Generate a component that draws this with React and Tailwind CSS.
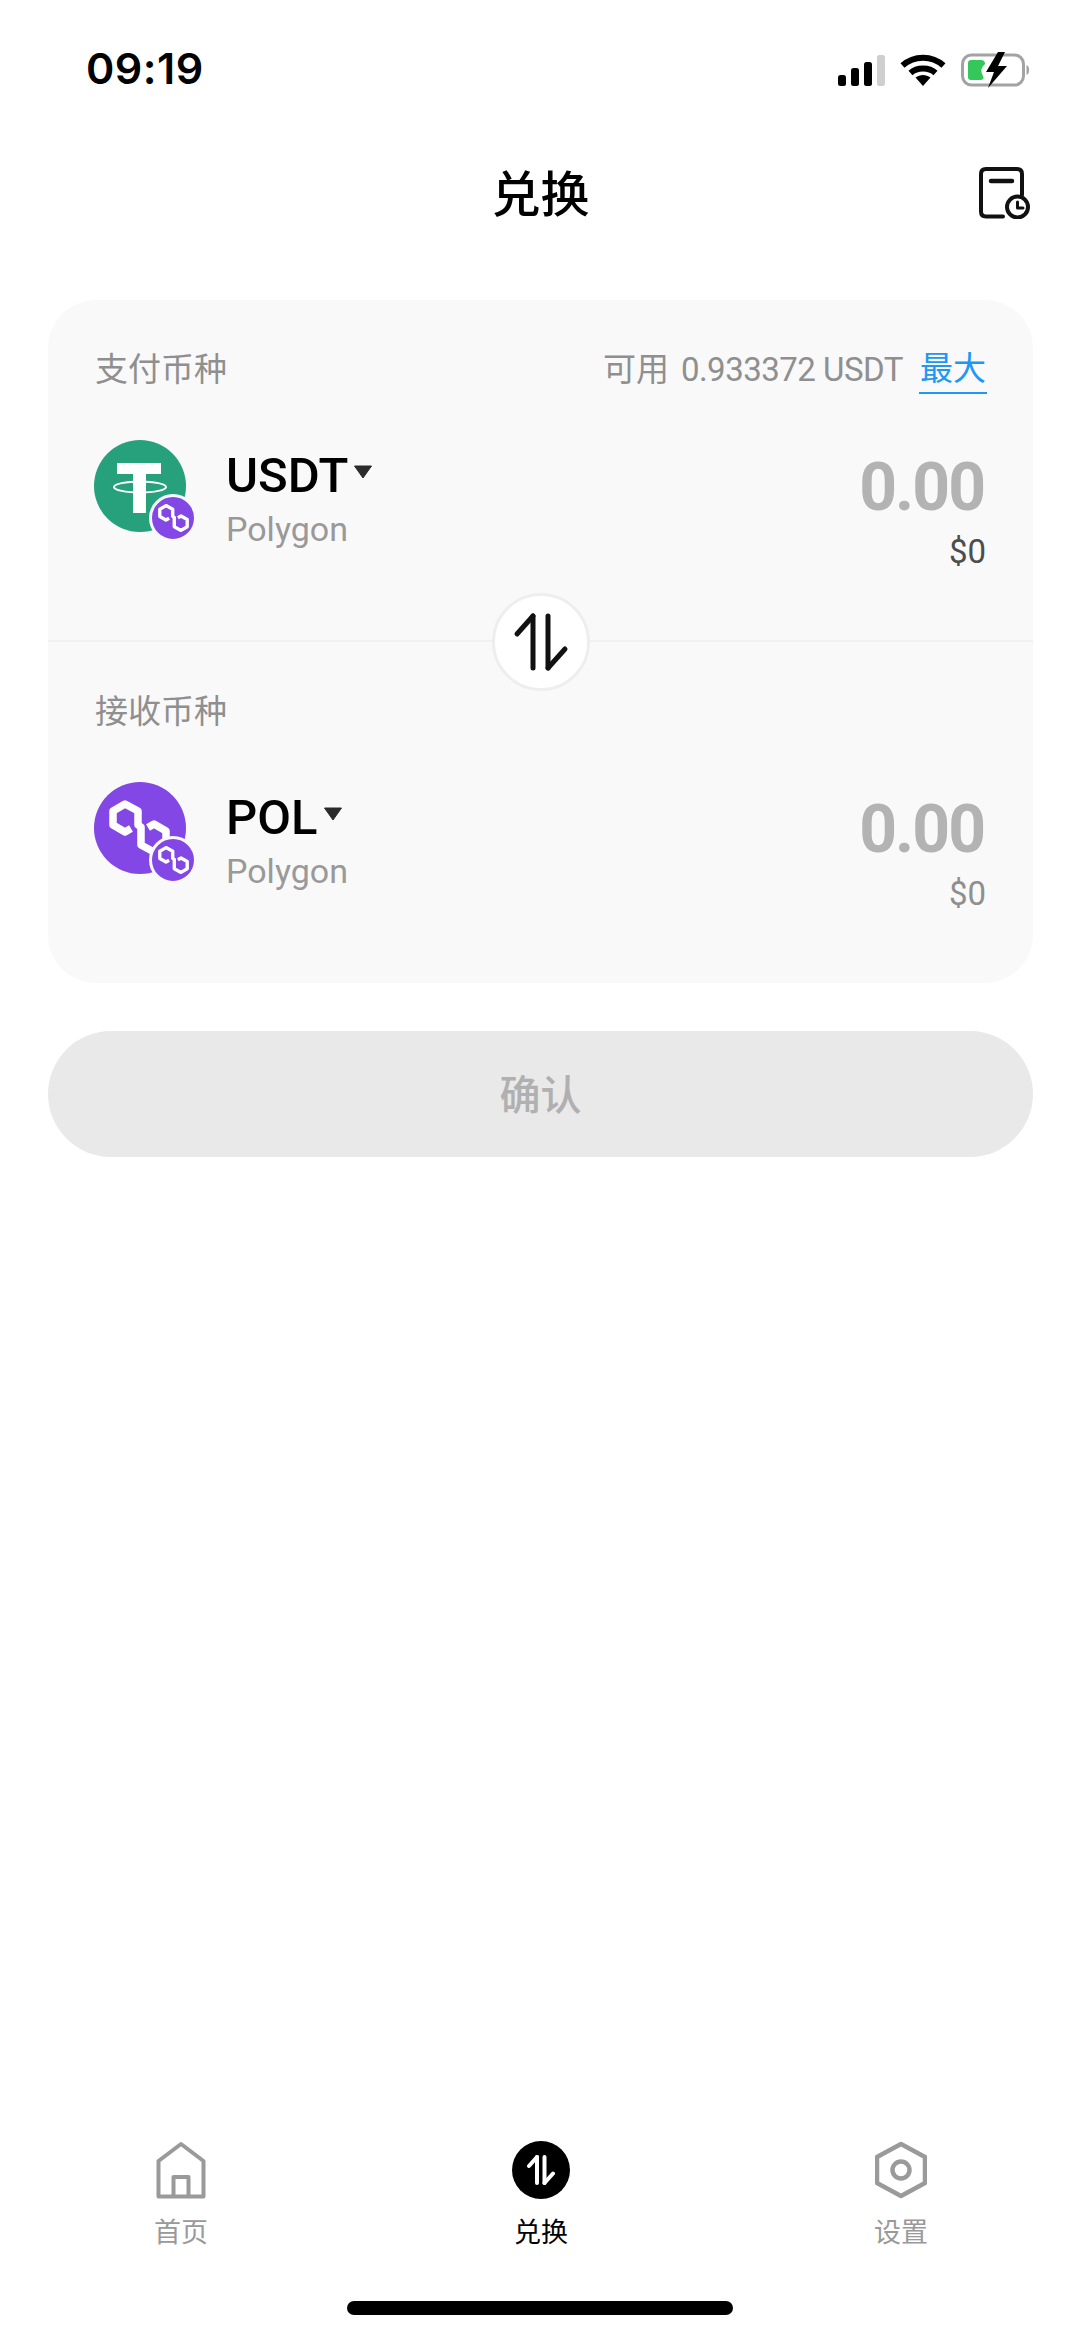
import React from "react";

const latin = "font-['Roboto','Noto_Sans_CJK_SC',sans-serif]";

function PolygonMark({ w, h, sw }) {
  return (
    <svg width={w} height={h} viewBox="14 17 63 58" fill="none" stroke="#fff" strokeWidth={sw} strokeLinejoin="round" strokeLinecap="butt">
      <path d="M37 46.5 L31 50 L19 43 V29 L31 22 L44 29 V43 L47 45 V63 L60 70 L72 63 V49 L60 42 L54 45.5" />
    </svg>
  );
}

function Badge() {
  return (
    <div className="absolute left-[55px] top-[54px] flex h-[48px] w-[48px] items-center justify-center rounded-full border-[3px] border-[#f9f9f9] bg-[#8247e5]">
      <PolygonMark w={33} h={30} sw={6.5} />
    </div>
  );
}

function TetherIcon() {
  return (
    <div className="relative h-[92px] w-[92px] shrink-0">
      <svg width="92" height="92" viewBox="0 0 92 92">
        <circle cx="46" cy="46" r="46" fill="#26a17b" />
        <rect x="23" y="23" width="44" height="11" fill="#fff" />
        <rect x="39" y="30" width="13" height="43" fill="#fff" />
        <ellipse cx="46" cy="47" rx="26" ry="5.5" fill="none" stroke="#fff" strokeWidth="2" />
      </svg>
      <Badge />
    </div>
  );
}

function PolIcon() {
  return (
    <div className="relative h-[92px] w-[92px] shrink-0">
      <div className="h-[92px] w-[92px] rounded-full bg-[#8247e5] pl-[14px] pt-[17px]">
        <PolygonMark w={63} h={58} sw={7.5} />
      </div>
      <Badge />
    </div>
  );
}

function Caret() {
  return (
    <svg width="20" height="14" viewBox="0 0 20 14" className="ml-[5px] mt-[-8px]">
      <path d="M1.5 1 H18.5 L10 13 Z" fill="#2b2b2b" stroke="#2b2b2b" strokeLinejoin="round" />
    </svg>
  );
}

function CoinRow({ icon, name, usdColor }) {
  return (
    <div className="mt-[46px] flex items-start justify-between">
      <div className="flex items-start">
        {icon}
        <div className="ml-[40px] flex flex-col">
          <div className="mt-[10px] flex h-[52px] items-center">
            <span className={`${latin} text-[49px] font-medium leading-[52px] text-black`}>{name}</span>
            <Caret />
          </div>
          <span className={`${latin} mt-[7px] text-[34px] leading-[40px] text-[#999999]`}>Polygon</span>
        </div>
      </div>
      <div className="flex flex-col items-end pr-[1px]">
        <span className={`${latin} mt-[12px] pr-[2px] text-[66px] font-bold leading-[72px] tracking-[-2px] text-[#b3b3b3]`}>0.00</span>
        <span className={`${latin} mt-[8px] text-[33px] leading-[40px] ${usdColor}`}>$0</span>
      </div>
    </div>
  );
}

function Signal() {
  return (
    <svg width="47" height="31" viewBox="0 0 47 31">
      <rect x="0" y="20" width="8" height="11" rx="2.5" fill="#000" />
      <rect x="13" y="13" width="8" height="18" rx="2.5" fill="#000" />
      <rect x="26" y="7" width="8" height="24" rx="2.5" fill="#000" />
      <rect x="39" y="0" width="8" height="31" rx="2.5" fill="#cfcfcf" />
    </svg>
  );
}

function Wifi() {
  return (
    <svg width="46" height="33" viewBox="0 0 46 33" fill="none" stroke="#000" strokeWidth="6">
      <path d="M2.5 11.5 C14 1 32 1 43.5 11.5" />
      <path d="M10.5 19 C17 13 29 13 35.5 19" />
      <path d="M15.5 23.5 L23 32 L30.5 23.5 C26 20 20 20 15.5 23.5 Z" fill="#000" stroke="none" />
    </svg>
  );
}

function Battery() {
  return (
    <svg width="71" height="36" viewBox="0 0 71 36">
      <rect x="1.5" y="3" width="61" height="30" rx="9" fill="none" stroke="#a3a3a3" strokeWidth="3" />
      <path d="M65.5 13 C69 14 69 22 65.5 23 Z" fill="#a3a3a3" />
      <path d="M7 11 Q7 8 10 8 H20 Q24 8 24 12 Q18 17 22 24 Q24 28 19 28 H10 Q7 28 7 25 Z" fill="#34c759" />
      <path d="M37 0 L25 20 H33 L27 36 L46 14 H37 L44 0 Z" fill="#000" />
    </svg>
  );
}

function HistoryIcon() {
  return (
    <svg width="52" height="52" viewBox="0 0 52 52" fill="none" stroke="#111" strokeLinecap="round" strokeLinejoin="round">
      <path d="M24 49.5 H7 Q2 49.5 2 44.5 V7 Q2 2 7 2 H38 Q43 2 43 7 V28" strokeWidth="4" />
      <path d="M12 14 H33" strokeWidth="4.5" />
      <circle cx="38.5" cy="40" r="10.5" strokeWidth="4" />
      <path d="M38.5 35 V41 H44" strokeWidth="3" />
    </svg>
  );
}

function SwapArrows({ size, color, sw }) {
  return (
    <svg width={size} height={size} viewBox="0 0 60 60" fill="none" stroke={color} strokeWidth={sw} strokeLinecap="round" strokeLinejoin="round">
      <path d="M22 4 V56" />
      <path d="M22 4 L6 22" />
      <path d="M37 4 V56" />
      <path d="M37 56 L54 37" />
    </svg>
  );
}

function HomeIcon() {
  return (
    <svg width="50" height="58" viewBox="0 0 50 58" fill="none" stroke="#9a9a9a" strokeWidth="4" strokeLinejoin="round">
      <path d="M2.5 55.5 V20 L25 3 L47.5 20 V55.5 Z" />
      <path d="M17.5 55.5 V36 H32.5 V55.5" />
    </svg>
  );
}

function SettingIcon() {
  return (
    <svg width="52" height="58" viewBox="0 0 52 58" fill="none" stroke="#9a9a9a" strokeWidth="4.5" strokeLinejoin="round">
      <path d="M26 3 L50 16 V42 L26 55 L2 42 V16 Z" />
      <circle cx="26" cy="29" r="8.5" />
    </svg>
  );
}

function Tab({ icon, label, active }) {
  return (
    <div className="flex w-[120px] flex-col items-center">
      <div className="flex h-[60px] items-center justify-center">{icon}</div>
      <span className={`${latin} mt-[15px] text-[27px] leading-[36px] ${active ? "text-black" : "text-[#999999]"}`}>{label}</span>
    </div>
  );
}

export default function App() {
  return (
    <div className="flex h-[2337px] w-[1080px] flex-col bg-white">
      <div className="flex h-[136px] items-start justify-between pl-[86px] pr-[48px] pt-[43px]">
        <span className="font-['Inter',sans-serif] text-[43px] font-semibold leading-[50px] tracking-[0.5px] text-black">09:19</span>
        <div className="mt-[9px] flex items-center gap-[15px]">
          <Signal />
          <Wifi />
          <Battery />
        </div>
      </div>
      <div className="grid h-[112px] grid-cols-[1fr_auto_1fr] items-center pl-[48px] pr-[47px]">
        <div />
        <span className="mb-[2px] font-['Noto_Sans_CJK_SC',sans-serif] text-[49px] font-medium leading-[60px] text-black">兑换</span>
        <div className="mt-[2px] flex justify-end pr-[2px]">
          <HistoryIcon />
        </div>
      </div>
      <div className="ml-[48px] mr-[47px] mt-[52px] h-[683px] rounded-[48px] bg-[#f9f9f9]">
        <div className="h-[342px] border-b-2 border-[#f1f1f1] px-[46px] pt-[46px]">
          <div className="flex h-[48px] items-center justify-between">
            <span className={`${latin} pl-[1px] text-[33px] text-[#8f8f8f]`}>支付币种</span>
            <div className="flex items-center">
              <span className={`${latin} text-[33px] text-[#8f8f8f]`}>可用</span>
              <span className={`${latin} ml-[12px] text-[33px] tracking-[-0.5px] text-[#8f8f8f]`}>0.933372 USDT</span>
              <span className={`${latin} ml-[16px] border-b-2 border-[#2196f3] px-[1px] text-[33px] leading-[46px] text-[#2196f3]`}>最大</span>
            </div>
          </div>
          <CoinRow icon={<TetherIcon />} name="USDT" usdColor="text-[#4d4d4d]" />
        </div>
        <div className="relative h-[341px] px-[46px] pt-[46px]">
          <div className="absolute left-[444px] top-[-49px] flex h-[98px] w-[98px] items-center justify-center rounded-full border-[3px] border-[#eeeeee] bg-white">
            <SwapArrows size={60} color="#111" sw={5} />
          </div>
          <div className="flex h-[48px] items-center">
            <span className={`${latin} pl-[1px] text-[33px] text-[#8f8f8f]`}>接收币种</span>
          </div>
          <CoinRow icon={<PolIcon />} name="POL" usdColor="text-[#8f8f8f]" />
        </div>
      </div>
      <div className="ml-[48px] mr-[47px] mt-[48px] flex h-[126px] items-center justify-center rounded-full bg-[#e9e9e9]">
        <span className="mb-[2px] font-['Noto_Sans_CJK_SC',sans-serif] text-[41px] font-medium text-[#b0b0b0]">确认</span>
      </div>
      <div className="flex-1" />
      <div className="flex justify-between pl-[121px] pr-[119px]">
        <Tab icon={<HomeIcon />} label="首页" />
        <Tab
          icon={
            <div className="flex h-[58px] w-[58px] items-center justify-center rounded-full bg-black">
              <SwapArrows size={30} color="#fff" sw={8} />
            </div>
          }
          label="兑换"
          active
        />
        <Tab icon={<SettingIcon />} label="设置" />
      </div>
      <div className="mb-[22px] mt-[50px] flex justify-center">
        <div className="h-[14px] w-[386px] rounded-full bg-black" />
      </div>
    </div>
  );
}
